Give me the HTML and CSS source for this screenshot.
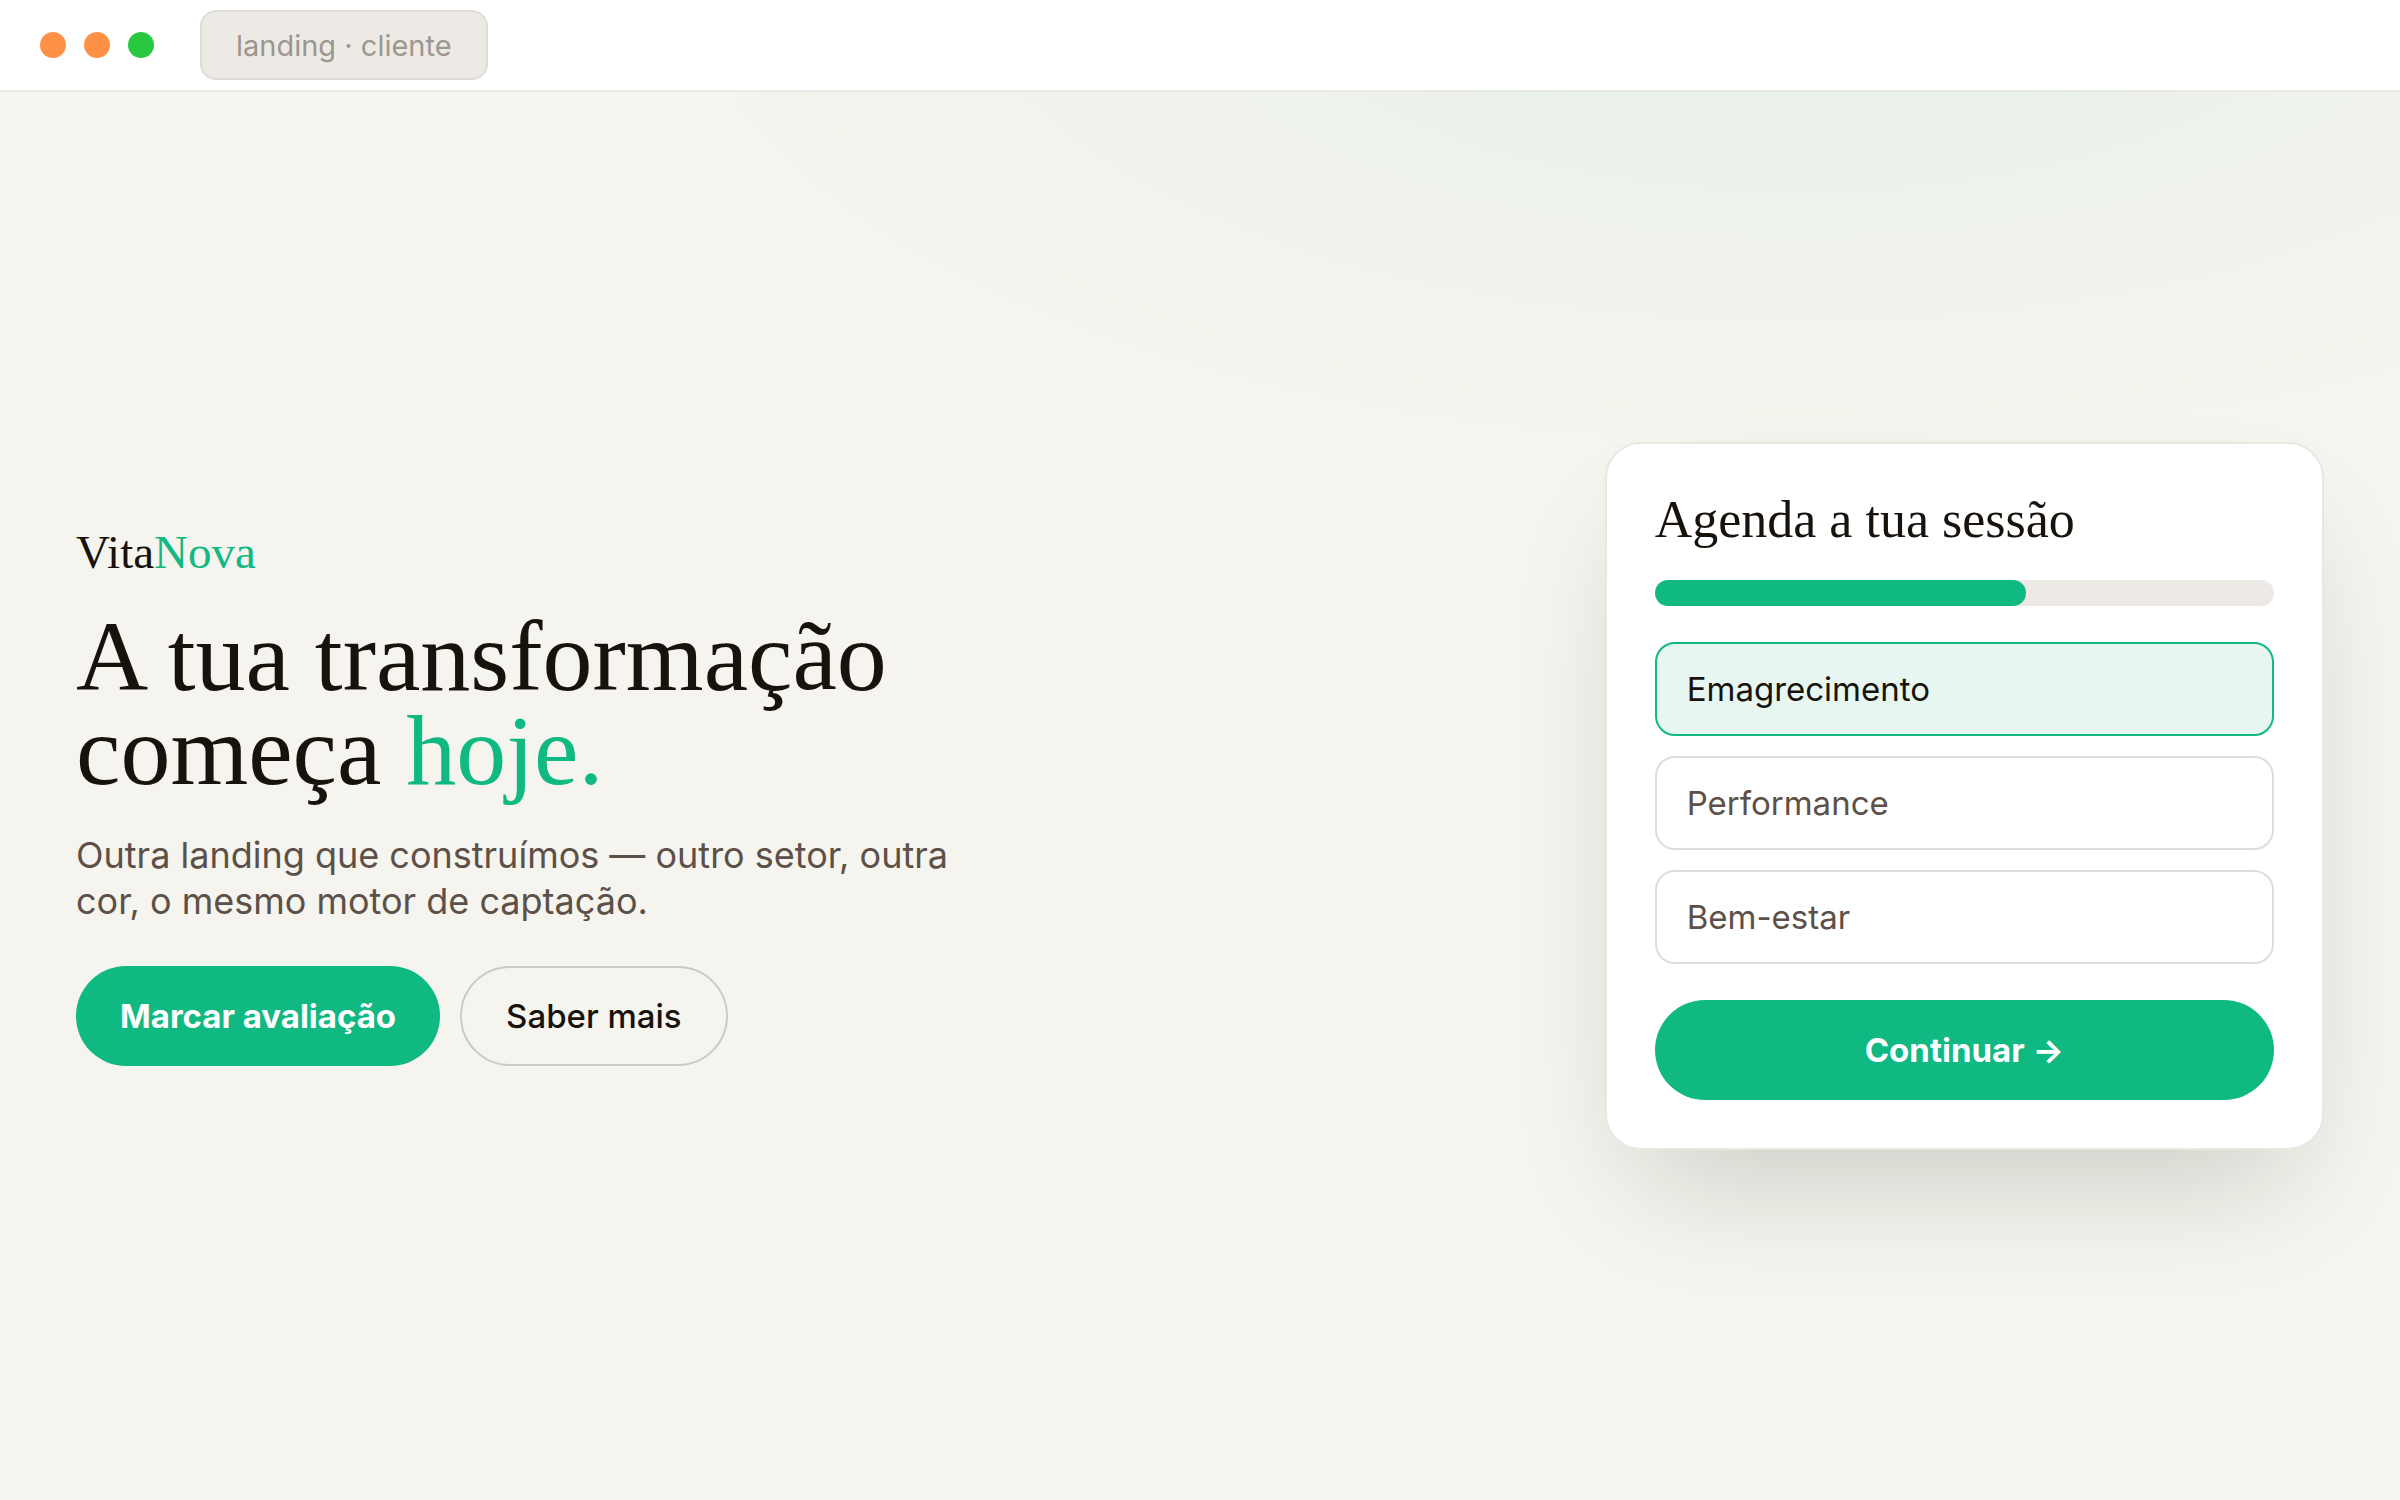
FILE: index.html
```html
<!DOCTYPE html>
<html lang="pt">
<head>
<meta charset="utf-8">
<meta name="viewport" content="width=device-width, initial-scale=1">
<title>VitaNova</title>
<link rel="stylesheet" href="styles.css">
</head>
<body>
<header class="topbar">
  <div class="dots" aria-hidden="true">
    <span class="dot"></span>
    <span class="dot"></span>
    <span class="dot dot-green"></span>
  </div>
  <span class="tab">landing · cliente</span>
</header>
<main class="hero">
  <section class="intro">
    <p class="brand">Vita<span class="accent">Nova</span></p>
    <h1 class="headline">A tua transformação<br>começa <span class="accent">hoje.</span></h1>
    <p class="lead">Outra landing que construímos — outro setor, outra cor, o mesmo motor de captação.</p>
    <div class="actions">
      <button class="btn btn-primary" type="button">Marcar avaliação</button>
      <button class="btn btn-outline" type="button">Saber mais</button>
    </div>
  </section>
  <form class="card">
    <h2 class="card-title">Agenda a tua sessão</h2>
    <div class="progress" role="progressbar" aria-label="Progresso" aria-valuemin="0" aria-valuemax="100" aria-valuenow="60">
      <div class="progress-fill" style="width: 60%"></div>
    </div>
    <div class="options">
      <label class="option"><input class="option-input" type="radio" name="objetivo" checked>Emagrecimento</label>
      <label class="option"><input class="option-input" type="radio" name="objetivo">Performance</label>
      <label class="option"><input class="option-input" type="radio" name="objetivo">Bem-estar</label>
    </div>
    <button class="btn btn-primary" type="button">Continuar →</button>
  </form>
</main>
</body>
</html>
```
FILE: styles.css
```css
:root {
  --green: #10b981;
  --ink: #18120d;
  --muted: #5c5048;
  --display: "Liberation Serif", serif;
  --body: Inter, sans-serif;
}

* {
  box-sizing: border-box;
}

body {
  display: flex;
  flex-direction: column;
  min-height: 100vh;
  margin: 0;
  background: #f5f4ee;
  color: var(--ink);
  font-family: var(--body);
}

.topbar {
  display: flex;
  align-items: center;
  gap: 46px;
  padding: 10px 40px;
  background: #fff;
}

.dots {
  display: flex;
  gap: 18px;
}

.dot {
  width: 26px;
  height: 26px;
  border-radius: 50%;
  background: #ff9147;
}

.dot-green {
  background: #28c840;
}

.tab {
  padding: 2px 34px 0;
  border: 2px solid #deddd8;
  border-radius: 16px;
  background: #edeae5;
  color: #9c9790;
  font-size: 29px;
  line-height: 64px;
}

.hero {
  flex: 1;
  display: flex;
  align-items: center;
  justify-content: space-between;
  gap: 76px;
  padding: 0 76px;
  border-top: 2px solid #ebebe5;
  background: radial-gradient(ellipse 80% 60% at 75% -10%, rgba(16, 185, 129, 0.07), transparent 60%);
}

.intro {
  max-width: 900px;
}

.brand {
  margin: 0 0 32px;
  font-family: var(--display);
  font-size: 47px;
  line-height: 52px;
}

.accent {
  color: var(--green);
}

.headline {
  margin: 0 0 34px;
  font-family: var(--display);
  font-size: 100px;
  font-weight: 400;
  line-height: 94px;
}

.lead {
  margin: 0 0 42px;
  color: var(--muted);
  font-size: 36px;
  line-height: 46px;
}

.actions {
  display: flex;
  gap: 20px;
}

.btn {
  height: 100px;
  padding: 0 44px;
  border: 0;
  border-radius: 50px;
  font-family: var(--body);
  font-size: 33px;
  cursor: pointer;
}

.btn-primary {
  background: var(--green);
  color: #fff;
  font-weight: 700;
}

.btn-outline {
  border: 2px solid #cbcac5;
  background: transparent;
  color: var(--ink);
  font-weight: 500;
}

.card {
  display: flex;
  flex-direction: column;
  flex: 0 0 32%;
  min-width: 480px;
  padding: 48px;
  border: 2px solid #e9e7e2;
  border-radius: 36px;
  background: #fff;
  box-shadow: 0 60px 120px -40px rgba(24, 18, 13, 0.2);
}

.card-title {
  margin: 0 0 32px;
  font-family: var(--display);
  font-size: 52px;
  font-weight: 400;
  line-height: 56px;
}

.progress {
  height: 26px;
  border-radius: 13px;
  background: #edeae5;
}

.progress-fill {
  height: 100%;
  border-radius: 13px;
  background: var(--green);
}

.options {
  display: flex;
  flex-direction: column;
  gap: 20px;
  margin: 36px 0;
}

.option {
  position: relative;
  padding: 0 30px;
  border: 2px solid #deddd8;
  border-radius: 20px;
  color: var(--muted);
  font-size: 33px;
  line-height: 90px;
  cursor: pointer;
}

.option-input {
  position: absolute;
  inset: 0;
  margin: 0;
  opacity: 0;
  cursor: pointer;
}

.option:has(.option-input:checked) {
  border-color: var(--green);
  background: #e7f6f0;
  color: var(--ink);
}
```
